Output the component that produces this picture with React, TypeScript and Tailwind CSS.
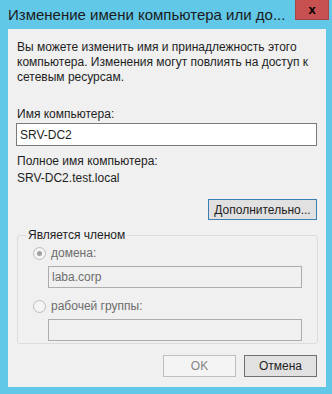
import React from "react"

const font = { fontFamily: '"Liberation Sans", Arial, sans-serif' }

function Radio({ checked }: { checked?: boolean }) {
  return (
    <span className="flex h-[13px] w-[13px] items-center justify-center rounded-full border border-[#bcbcbc] bg-[#f4f4f4]">
      {checked && <span className="h-[5px] w-[5px] rounded-full bg-[#a0a0a0]" />}
    </span>
  )
}

export default function App() {
  return (
    <div className="flex h-[394px] w-[332px] flex-col bg-[#62c8e8] text-[12px] text-[#1e1e1e]" style={font}>
      <div className="flex h-[29px] items-start">
        <div className="pl-[8px] pt-[6px] text-[15px] leading-[18px] text-[#1b1b1b]">
          Изменение имени компьютера или до...
        </div>
        <div className="ml-auto mr-[3px] flex h-[20px] w-[34px] items-center justify-center border border-t-0 border-[#a84444] bg-[#c75050] text-[13px] font-bold leading-none text-black">
          x
        </div>
      </div>

      <div className="ml-[8px] flex h-[358px] w-[318px] flex-col bg-[#f0f0f0] px-[9px]">
        <p className="mt-[11px] leading-[15px]">
          Вы можете изменить имя и принадлежность этого компьютера. Изменения могут повлиять на доступ к сетевым ресурсам.
        </p>

        <div className="mt-[22px] leading-[15px]">Имя компьютера:</div>
        <div className="mt-[1px] flex h-[23px] w-[301px] items-center border border-[#7a7a7a] bg-white px-[3px] -ml-[1px]">
          SRV-DC2
        </div>

        <div className="mt-[8px] leading-[15px]">Полное имя компьютера:</div>
        <div className="mt-[2px] leading-[15px]">SRV-DC2.test.local</div>

        <div className="mt-[13px] flex justify-end">
          <button
            type="button"
            className="flex h-[21px] w-[109px] items-center justify-center border border-[#3c7fb1] bg-[#e1e1e1] text-[12px] text-[#1e1e1e]"
          >
            Дополнительно...
          </button>
        </div>

        <fieldset className="mt-[8px] h-[116px] rounded-[3px] border border-[#dcdcdc] px-[15px] pb-0">
          <legend className="ml-[-7px] px-[2px] leading-[14px] text-[#1e1e1e]">Является членом</legend>
          <div className="mt-[4px] flex items-center gap-[5px] text-[#6d6d6d]">
            <Radio checked />
            <span className="leading-[15px]">домена:</span>
          </div>
          <div className="ml-[15px] mt-[5px] flex h-[22px] w-[254px] items-center border border-[#adadad] bg-[#f0f0f0] px-[3px] text-[#6d6d6d]">
            laba.corp
          </div>
          <div className="mt-[11px] flex items-center gap-[5px] text-[#6d6d6d]">
            <Radio />
            <span className="leading-[15px]">рабочей группы:</span>
          </div>
          <div className="ml-[15px] mt-[5px] h-[22px] w-[254px] border border-[#adadad] bg-[#f0f0f0]" />
        </fieldset>

        <div className="mt-[11px] flex justify-end gap-[8px]">
          <button
            type="button"
            className="flex h-[22px] w-[73px] items-center justify-center border border-[#bfbfbf] bg-[#f4f4f4] text-[12px] text-[#838383]"
          >
            OK
          </button>
          <button
            type="button"
            className="flex h-[22px] w-[73px] items-center justify-center border border-[#707070] bg-[#e1e1e1] text-[12px] text-[#1e1e1e]"
          >
            Отмена
          </button>
        </div>
      </div>
    </div>
  )
}
